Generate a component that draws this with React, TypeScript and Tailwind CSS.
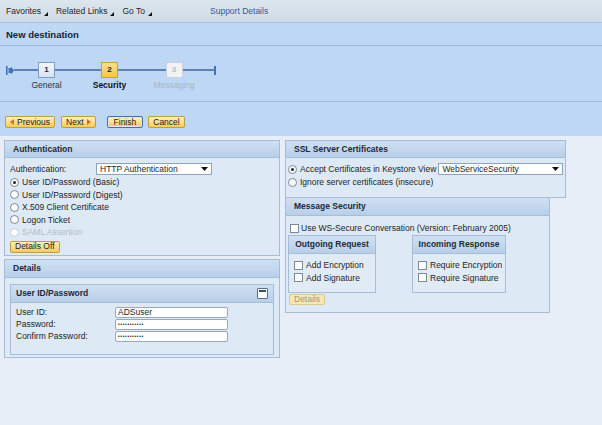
import React from 'react';

const Radio = ({ checked = false, disabled = false }: { checked?: boolean; disabled?: boolean }) => (
  <span
    className={`w-[9px] h-[9px] rounded-full border bg-white flex items-center justify-center shrink-0 ${
      disabled ? 'border-[#c3cbd4]' : 'border-[#75869a]'
    }`}
  >
    {checked && <span className="w-[3px] h-[3px] rounded-full bg-[#222]" />}
  </span>
);

const Check = () => <span className="w-[9px] h-[9px] border border-[#7c8998] bg-white shrink-0" />;

const Caret = () => (
  <svg width="7" height="4" viewBox="0 0 7 4">
    <path d="M0 0 L7 0 L3.5 4 Z" fill="#111" />
  </svg>
);

const Select = ({ value, className }: { value: string; className: string }) => (
  <div
    className={`h-[12px] border border-[#8ea3bd] bg-white flex items-center justify-between pl-[3px] pr-[3px] ${className}`}
  >
    <span>{value}</span>
    <Caret />
  </div>
);

const Btn = ({ children, className = '' }: { children: React.ReactNode; className?: string }) => (
  <div
    className={`h-[12px] px-[4px] flex items-center gap-[3px] border border-[#c39c3e] rounded-[2px] bg-gradient-to-b from-[#fff1b6] to-[#f5cb58] text-[#222] ${className}`}
  >
    {children}
  </div>
);

const PanelHead = ({ title, className = '' }: { title: string; className?: string }) => (
  <div
    className={`h-[17px] flex items-center px-[8px] font-bold bg-gradient-to-b from-[#d0e0f2] to-[#b8cfe9] border-b border-[#a7bcd6] text-[#1c2a3a] ${className}`}
  >
    {title}
  </div>
);

const MenuArrow = () => (
  <svg width="4" height="4" viewBox="0 0 4 4" className="mt-[5px] ml-[3px]">
    <path d="M4 0 L4 4 L0 4 Z" fill="#111" />
  </svg>
);

const Step = ({
  n,
  label,
  width,
  box,
  text,
}: {
  n: string;
  label: string;
  width: string;
  box: string;
  text: string;
}) => (
  <div className={`flex flex-col items-center ${width}`}>
    <div className="flex items-center w-full">
      <div className="flex-1 h-[2px] bg-[#5d82b6]" />
      <div className={`w-[17px] h-[16px] flex items-center justify-center text-[8px] font-bold ${box}`}>{n}</div>
      <div className="flex-1 h-[2px] bg-[#5d82b6]" />
    </div>
    <div className={`mt-[3px] ${text}`}>{label}</div>
  </div>
);

export default function App() {
  return (
    <div className="w-[602px] h-[425px] overflow-hidden bg-[#e7eef7] font-['Liberation_Sans',Arial,sans-serif] text-[8.5px] leading-none text-[#1e1e1e]">
      <div className="bg-[#bdd7f4]">
        <div className="h-[23px] flex items-center bg-gradient-to-b from-[#dde6ee] to-[#cfdbe6] border-b border-[#a9c3e2] pl-[6px]">
          <span className="flex items-start">Favorites<MenuArrow /></span>
          <span className="flex items-start ml-[8px]">Related Links<MenuArrow /></span>
          <span className="flex items-start ml-[8px]">Go To<MenuArrow /></span>
          <span className="ml-[58px] text-[#34589a]">Support Details</span>
        </div>
        <div className="h-[23px] flex items-center pl-[6px] pt-[2px] border-b border-[#9ab6da] text-[9.5px] font-bold text-[#15243a]">
          New destination
        </div>
        <div className="h-[56px] border-b border-[#9cb8db] pt-[16px] pl-[6px] flex items-start">
          <div className="h-[16px] flex items-center">
            <svg width="8" height="9" viewBox="0 0 8 9">
              <rect x="0" y="0" width="1.6" height="9" fill="#3f74bf" />
              <path d="M2.5 2 L5 2 L5 0.5 L8 4.5 L5 8.5 L5 7 L2.5 7 Z" fill="#3f74bf" />
            </svg>
          </div>
          <Step
            n="1"
            label="General"
            width="w-[65px]"
            box="border border-[#7d9dc6] bg-gradient-to-b from-[#f2f6fb] to-[#d6e3f1] text-[#1d2c40]"
            text="text-[#2a3444]"
          />
          <Step
            n="2"
            label="Security"
            width="w-[61px]"
            box="border border-[#c9a13a] bg-gradient-to-b from-[#fbe08a] to-[#f4c548] text-[#1d1d1d]"
            text="text-[#111] font-bold"
          />
          <Step
            n="3"
            label="Messaging"
            width="w-[68px]"
            box="border border-[#c9d2dc] bg-[#f3f3f3] text-[#b4bcc6]"
            text="text-[#a8b4c2]"
          />
          <div className="h-[16px] flex items-center">
            <div className="w-[6px] h-[2px] bg-[#5d82b6]" />
            <div className="w-[2px] h-[9px] bg-[#3f74bf]" />
          </div>
        </div>
        <div className="h-[34px] flex items-start pl-[5px] pt-[14px]">
          <Btn>
            <svg width="4" height="6" viewBox="0 0 4 6">
              <path d="M4 0 L4 6 L0 3 Z" fill="#d2701c" />
            </svg>
            Previous
          </Btn>
          <Btn className="ml-[6px]">
            Next
            <svg width="4" height="6" viewBox="0 0 4 6">
              <path d="M0 0 L0 6 L4 3 Z" fill="#d2701c" />
            </svg>
          </Btn>
          <div className="ml-[11px] border border-[#4d6d9f] rounded-[2px] p-[1px] bg-[#dbe6f3]">
            <div className="h-[8px] px-[5px] flex items-center bg-gradient-to-b from-[#fff1b6] to-[#f5cb58]">Finish</div>
          </div>
          <Btn className="ml-[5px]">Cancel</Btn>
        </div>
      </div>

      <div className="flex items-start pt-[4px] pl-[4px] gap-[5px]">
        <div className="w-[276px] flex flex-col gap-[3px]">
          <div className="border border-[#a7bcd6] bg-[#dde9f5] h-[116px]">
            <PanelHead title="Authentication" />
            <div className="pt-[5px] pl-[5px]">
              <div className="flex items-center h-[12px] mb-[1px]">
                <span className="w-[86px]">Authentication:</span>
                <Select value="HTTP Authentication" className="w-[116px]" />
              </div>
              {[
                ['User ID/Password (Basic)', true, false],
                ['User ID/Password (Digest)', false, false],
                ['X.509 Client Certificate', false, false],
                ['Logon Ticket', false, false],
                ['SAML Assertion', false, true],
              ].map(([label, checked, disabled]) => (
                <div key={label as string} className="h-[12.5px] flex items-center gap-[3px]">
                  <Radio checked={checked as boolean} disabled={disabled as boolean} />
                  <span className={disabled ? 'text-[#b3bcc7]' : ''}>{label as string}</span>
                </div>
              ))}
              <Btn className="w-fit mt-[2px]">Details Off</Btn>
            </div>
          </div>

          <div className="border border-[#a7bcd6] bg-[#dde9f5] h-[99px]">
            <PanelHead title="Details" className="h-[18px]" />
            <div className="pt-[6px] px-[5px]">
              <div className="border border-[#a7bcd6] bg-[#dde9f5] h-[71px]">
                <div className="h-[18px] flex items-center justify-between px-[5px] font-bold bg-gradient-to-b from-[#d0e0f2] to-[#b8cfe9] border-b border-[#a7bcd6] text-[#1c2a3a]">
                  <span>User ID/Password</span>
                  <div className="w-[11px] h-[11px] border border-[#5b6f88] bg-white rounded-[1px] flex flex-col">
                    <div className="h-[2px] bg-[#3c5068] mx-[1px] mt-[1px]" />
                  </div>
                </div>
                <div className="pt-[4px] pl-[5px] flex flex-col gap-[1px]">
                  {[
                    ['User ID:', 'ADSuser'],
                    ['Password:', '•••••••••••'],
                    ['Confirm Password:', '•••••••••••'],
                  ].map(([l, v]) => (
                    <div key={l} className="flex items-center h-[11px]">
                      <span className="w-[99px]">{l}</span>
                      <div
                        className={`w-[113px] h-[11px] border border-[#9aa7b6] rounded-[2px] bg-white flex items-center pl-[2px] ${
                          v === 'ADSuser' ? '' : 'text-[5px] tracking-[0.6px]'
                        }`}
                      >
                        {v}
                      </div>
                    </div>
                  ))}
                </div>
              </div>
            </div>
          </div>
        </div>

        <div className="flex flex-col">
          <div className="w-[281px] border border-[#a7bcd6] bg-[#dde9f5] h-[58px]">
            <PanelHead title="SSL Server Certificates" />
            <div className="pt-[5px] pl-[2px]">
              <div className="h-[12px] flex items-center gap-[3px] mb-[1px]">
                <Radio checked />
                <span>Accept Certificates in Keystore View</span>
                <Select value="WebServiceSecurity" className="w-[125px] ml-[-1px]" />
              </div>
              <div className="h-[12px] flex items-center gap-[3px]">
                <Radio />
                <span>Ignore server certificates (insecure)</span>
              </div>
            </div>
          </div>
          <div className="w-[265px] border border-t-0 border-[#a7bcd6] bg-[#dde9f5] h-[115px]">
            <PanelHead title="Message Security" className="h-[18px]" />
            <div className="pt-[6px] pl-[2px]">
              <div className="h-[12px] flex items-center gap-[2px] pl-[2px]">
                <Check />
                <span>Use WS-Secure Conversation (Version: February 2005)</span>
              </div>
              <div className="flex gap-[36px] mt-[1px]">
                {[
                  ['Outgoing Request', 'w-[88px]', ['Add Encryption', 'Add Signature']],
                  ['Incoming Response', 'w-[94px]', ['Require Encryption', 'Require Signature']],
                ].map(([title, w, items]) => (
                  <div key={title as string} className={`${w} h-[58px] border border-[#a7bcd6] bg-[#e1ebf6]`}>
                    <div className="h-[18px] flex items-center justify-center font-bold bg-gradient-to-b from-[#d0e0f2] to-[#b8cfe9] border-b border-[#a7bcd6] text-[#1c2a3a]">
                      {title as string}
                    </div>
                    <div className="pt-[5px] pl-[5px]">
                      {(items as string[]).map((it) => (
                        <div key={it} className="h-[12.5px] flex items-center gap-[3px]">
                          <Check />
                          <span>{it}</span>
                        </div>
                      ))}
                    </div>
                  </div>
                ))}
              </div>
              <div className="mt-[1px] ml-[1px] w-fit h-[11px] px-[4px] flex items-center border border-[#dcc98c] rounded-[2px] bg-[#f7e7b0] text-[#9a9a8a]">
                Details
              </div>
            </div>
          </div>
        </div>
      </div>
    </div>
  );
}
